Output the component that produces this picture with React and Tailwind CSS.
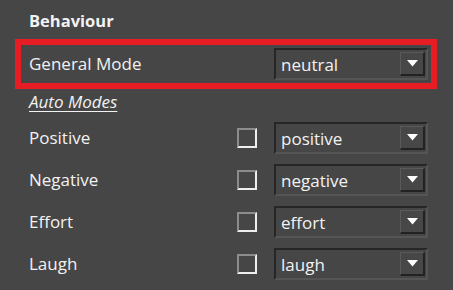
import React from "react";

const font = { fontFamily: '"Open Sans", "Noto Sans", sans-serif' };

function Dropdown({ value }) {
  return (
    <div className="flex h-[32px] w-[154px] items-center border-t-2 border-l-2 border-b-2 border-r-2 border-t-[#262626] border-l-[#262626] border-b-[#555555] border-r-[#555555] bg-[#464646]">
      <span className="flex-1 pl-[5px] text-[17px] leading-none text-[#f2f2f2]">{value}</span>
      <div className="mr-[1px] flex h-[24px] w-[25px] items-center justify-center border-t border-l border-t-[#5a5a5a] border-l-[#5a5a5a] border-b-2 border-r-2 border-b-[#222222] border-r-[#222222] bg-[#474747]">
        <svg width="11" height="7" viewBox="0 0 11 7">
          <polygon points="0,0 11,0 5.5,6.5" fill="#ffffff" />
        </svg>
      </div>
    </div>
  );
}

function Row({ label, value }) {
  return (
    <div className="flex h-[42px] items-center pl-[14px]">
      <span className="w-[208px] text-[17px] text-[#f2f2f2]">{label}</span>
      <div className="h-[20px] w-[20px] border-2 border-t-[#8c8c8c] border-l-[#8c8c8c] border-b-[#eeeeee] border-r-[#eeeeee]" />
      <div className="ml-[17px]">
        <Dropdown value={value} />
      </div>
    </div>
  );
}

export default function App() {
  return (
    <div className="h-[290px] w-[453px] overflow-hidden bg-[#464646] px-[15px]" style={font}>
      <div className="h-[39px] pt-[11px] pl-[14px] text-[16.5px] font-bold leading-[20px] text-[#f2f2f2]">Behaviour</div>
      <div className="flex h-[50px] w-[422px] items-center border-[6px] border-[#e81c24] pl-[8px]">
        <span className="flex-1 text-[17px] text-[#f2f2f2]">General Mode</span>
        <div className="mr-[3px]">
          <Dropdown value="neutral" />
        </div>
      </div>
      <div className="h-[28px] pl-[14px] pt-[1px]">
        <span className="text-[17px] italic text-[#f2f2f2] underline underline-offset-[3px] leading-[22px]">Auto Modes</span>
      </div>
      <Row label="Positive" value="positive" />
      <Row label="Negative" value="negative" />
      <Row label="Effort" value="effort" />
      <Row label="Laugh" value="laugh" />
    </div>
  );
}
